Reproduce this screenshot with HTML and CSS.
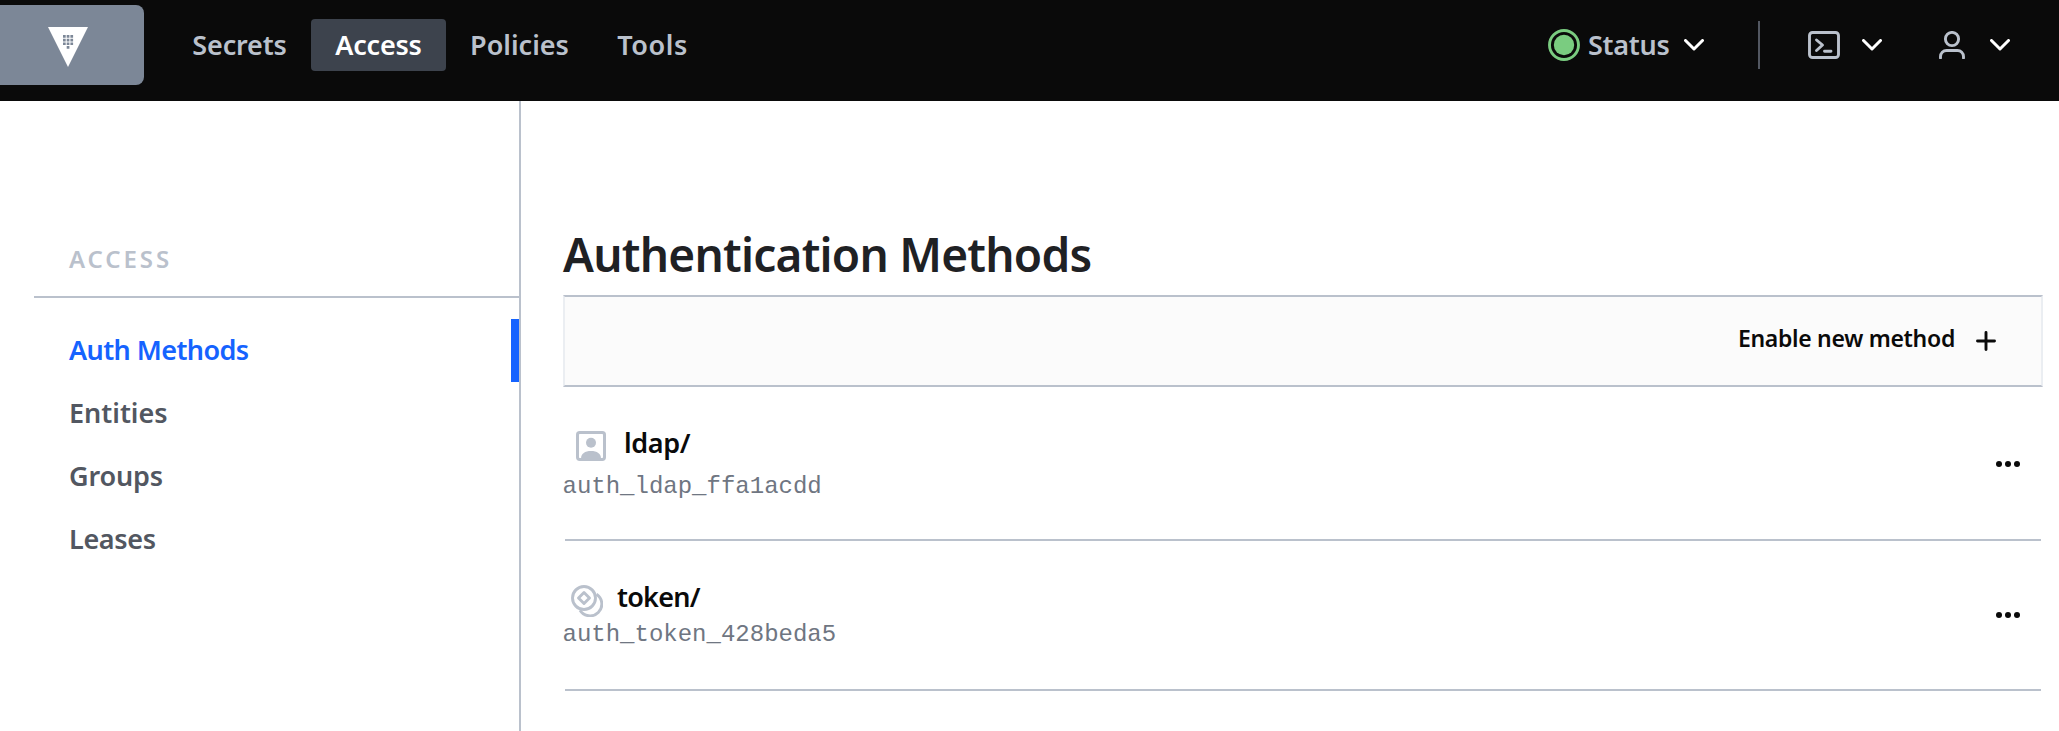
FILE: index.html
```html
<!DOCTYPE html>
<html lang="en">
<head>
<meta charset="utf-8">
<title>Vault</title>
<link rel="stylesheet" href="styles.css">
</head>
<body>
<header class="topbar">
  <a class="brand">
    <svg class="brand-mark" viewBox="0 0 40 40" width="40" height="40">
      <path fill="#fff" d="M0 0h40L20 40z"/>
      <path fill="#7c8797" d="M15 8h2.7v2.7H15zM18.7 8h2.7v2.7h-2.7zM22.4 8h2.7v2.7h-2.7zM15 11.7h2.7v2.7H15zM18.7 11.7h2.7v2.7h-2.7zM22.4 11.7h2.7v2.7h-2.7zM15 15.4h2.7v2.7H15zM18.7 15.4h2.7v2.7h-2.7zM22.4 15.4h2.7v2.7h-2.7zM18.7 19.1h2.7v2.7h-2.7z"/>
    </svg>
  </a>
  <nav class="main-nav">
    <a class="nav-link secrets">Secrets</a>
    <a class="nav-link access active">Access</a>
    <a class="nav-link policies">Policies</a>
    <a class="nav-link tools">Tools</a>
  </nav>
  <div class="actions">
    <a class="status">
      <svg width="32" height="32" viewBox="0 0 32 32"><circle cx="16" cy="16" r="14.5" fill="none" stroke="#7acc80" stroke-width="2.9"/><circle cx="16" cy="16" r="10.2" fill="#7acc80"/></svg>
      <span class="status-text">Status</span>
      <svg class="chevron" width="20" height="12" viewBox="0 0 20 12"><path d="M1.5 1.5 10 10l8.5-8.5"/></svg>
    </a>
    <span class="divider"></span>
    <a class="console">
      <svg class="line-icon" width="32" height="28" viewBox="0 0 32 28"><rect x="1.5" y="1.5" width="29" height="25" rx="3"/><path d="m8.5 9 6 5-6 5.5M16.5 20.3h6.5"/></svg>
      <svg class="chevron" width="20" height="12" viewBox="0 0 20 12"><path d="M1.5 1.5 10 10l8.5-8.5"/></svg>
    </a>
    <a class="user">
      <svg class="line-icon" width="26" height="28" viewBox="0 0 26 28"><circle cx="13" cy="8" r="6.6"/><path d="M1.5 27v-1.500a6 6 0 0 1 6-6h11a6 6 0 0 1 6 6V27"/></svg>
      <svg class="chevron" width="20" height="12" viewBox="0 0 20 12"><path d="M1.5 1.5 10 10l8.5-8.5"/></svg>
    </a>
  </div>
</header>
<div class="page">
  <aside class="sidebar">
    <p class="menu-label">ACCESS</p>
    <nav class="menu">
      <a class="menu-link auth active">Auth Methods</a>
      <a class="menu-link">Entities</a>
      <a class="menu-link groups">Groups</a>
      <a class="menu-link leases">Leases</a>
    </nav>
  </aside>
  <main class="content">
    <h1 class="title">Authentication Methods</h1>
    <div class="toolbar">
      <a class="toolbar-link"><span>Enable new method</span>
        <svg width="20" height="20" viewBox="0 0 20 20"><path d="M10 1.5v17M1.5 10h17" fill="none" stroke="#0a0a0a" stroke-width="2.9" stroke-linecap="round"/></svg>
      </a>
    </div>
    <section class="row ldap">
      <div class="info">
        <div class="name">
          <svg class="name-icon" width="30" height="30" viewBox="0 0 30 30"><rect x="1.5" y="1.5" width="27" height="27" rx="2.2" fill="none" stroke="#bac1cc" stroke-width="3"/><circle cx="15" cy="11.7" r="5" fill="#bac1cc"/><path d="M5 27.500c0-5 4-7.500 10-7.500s10 2.500 10 7.500z" fill="#bac1cc"/></svg>
          <span>ldap/</span>
        </div>
        <code class="accessor">auth_ldap_ffa1acdd</code>
      </div>
      <svg class="more" width="24" height="6" viewBox="0 0 24 6"><circle cx="3" cy="3" r="3"/><circle cx="12" cy="3" r="3"/><circle cx="21" cy="3" r="3"/></svg>
    </section>
    <section class="row token">
      <div class="info">
        <div class="name">
          <svg class="name-icon" width="32" height="32" viewBox="0 0 32 32" fill="none" stroke="#bac1cc" stroke-width="2.9"><circle cx="13" cy="13" r="11.5"/><path d="m13 7.500 5.500 5.500-5.500 5.500L7.500 13z" stroke-linejoin="round"/><path d="M25.500 9.200A11.800 11.800 0 1 1 9 25.300"/></svg>
          <span>token/</span>
        </div>
        <code class="accessor">auth_token_428beda5</code>
      </div>
      <svg class="more" width="24" height="6" viewBox="0 0 24 6"><circle cx="3" cy="3" r="3"/><circle cx="12" cy="3" r="3"/><circle cx="21" cy="3" r="3"/></svg>
    </section>
  </main>
</div>
</body>
</html>
```
FILE: styles.css
```css
* { box-sizing: border-box; }
body {
  margin: 0;
  height: 731px;
  overflow: hidden;
  background: #fff;
  font: 600 27px/52px "Noto Sans", sans-serif;
  letter-spacing: 0;
}
svg { display: block; flex: none; }
.topbar {
  display: flex;
  height: 101px;
  background: #0a0a0a;
  color: #bac1cc;
}
.brand {
  width: 144px;
  height: 80px;
  margin-top: 5px;
  padding: 22px 0 0 48px;
  background: #7c8797;
  border-radius: 0 8px 8px 0;
}
.main-nav { display: flex; margin: 19px 0 0 24px; }
.nav-link {
  height: 52px;
  border-radius: 4px;
  text-align: center;
}
.nav-link.active { background: #3d434d; color: #fff; }
.secrets { width: 143px; letter-spacing: -0.15px; }
.access { width: 135px; letter-spacing: -0.2px; }
.policies { width: 147px; }
.tools { width: 119px; letter-spacing: 0.55px; }
.actions {
  display: flex;
  align-items: center;
  height: 52px;
  margin: 19px 49px 0 auto;
}
.status, .console, .user { display: flex; align-items: center; }
.status-text { width: 96px; padding-left: 8px; height: 52px; letter-spacing: -0.25px; }
.status .chevron { margin-left: 8px; }
.divider { width: 2px; height: 48px; margin: 0 48px 0 54px; background: #525761; }
.chevron { fill: none; stroke: #fff; stroke-width: 3; stroke-linecap: round; stroke-linejoin: round; }
.console .chevron { margin-left: 22px; }
.user { margin-left: 57px; }
.user .chevron { margin-left: 25px; }
.line-icon { fill: none; stroke: #bac1cc; stroke-width: 2.9; stroke-linecap: round; stroke-linejoin: round; }

.page { display: flex; height: 630px; }
.sidebar {
  width: 521px;
  padding-left: 34px;
  border-right: 2px solid #bac1cc;
}
.menu-label {
  height: 197px;
  margin: 0;
  padding: 132px 0 0 35px;
  border-bottom: 2px solid #bac1cc;
  color: #bac1cc;
  font-size: 24px;
  letter-spacing: 2.9px;
}
.menu { padding-top: 21px; }
.menu-link {
  display: block;
  height: 63px;
  padding-left: 35px;
  line-height: 61px;
  color: #525761;
}
.menu-link.auth { letter-spacing: -0.58px; }
.menu-link.groups { letter-spacing: -0.15px; }
.menu-link.leases { letter-spacing: -0.35px; }
.menu-link.active { color: #1563ff; border-right: 8px solid #1563ff; }

.content { flex: 1; padding: 119px 16px 0 42px; }
.title {
  height: 75px;
  margin: 0;
  color: #1f2124;
  font-size: 46px;
  font-weight: 600;
  line-height: 68px;
  letter-spacing: -0.76px;
}
.toolbar {
  display: flex;
  justify-content: flex-end;
  height: 92px;
  padding: 17px 45px 0 0;
  background: #fbfbfb;
  border: 2px solid #bac1cc;
  border-left-color: #ebeef2;
  border-right-color: #ebeef2;
}
.toolbar-link {
  display: flex;
  height: 50px;
  color: #0a0a0a;
  font-size: 23px;
  line-height: 49px;
  letter-spacing: -0.3px;
}
.toolbar-link svg { margin: 17px 0 0 21px; }
.row {
  display: flex;
  justify-content: space-between;
  margin: 0 2px;
  border-bottom: 2px solid #bac1cc;
}
.ldap { height: 154px; padding-top: 30px; }
.token { height: 150px; padding-top: 31px; }
.info { margin-left: -2px; }
.name { display: flex; height: 50px; color: #0a0a0a; letter-spacing: -0.4px; }
.ldap .name-icon { margin: 14px 18px 0 13px; }
.token .name-icon { margin: 13px 14px 0 8px; }
.token .name { letter-spacing: -0.75px; line-height: 50px; }
.accessor {
  display: block;
  margin-left: -0.5px;
  color: #6f7682;
  font: 400 24px/28px "Liberation Mono", monospace;
  letter-spacing: 0;
}
.ldap .accessor { margin-top: 6px; }
.token .accessor { margin-top: -1px; }
.more { fill: #0a0a0a; margin: 44px 21px 0 0; }
.token .more { margin-top: 40px; }
```
